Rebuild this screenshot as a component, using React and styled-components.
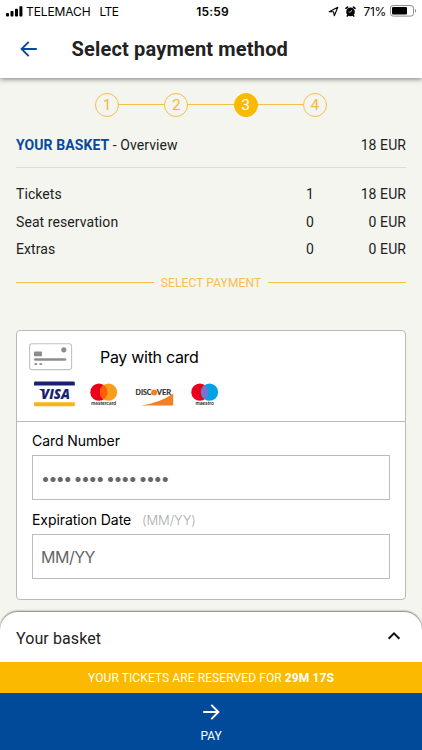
import { Fragment, useState } from "react";
import styled, { createGlobalStyle } from "styled-components";

const GlobalStyle = createGlobalStyle`
  * {
    box-sizing: border-box;
  }

  body {
    margin: 0;
    background: #f4f5ef;
    color: #222;
    font-family: Roboto, "Liberation Sans", sans-serif;
  }
`;

const steps = [1, 2, 3, 4];

const basketRows = [
  { name: "Tickets", count: 1, price: "18 EUR" },
  { name: "Seat reservation", count: 0, price: "0 EUR" },
  { name: "Extras", count: 0, price: "0 EUR" },
];

const SignalIcon = () => (
  <svg width="17" height="11" viewBox="0 0 17 11">
    <rect x="0" y="7" width="3" height="3.5" rx="0.8" />
    <rect x="4.5" y="5" width="3" height="5.5" rx="0.8" />
    <rect x="9" y="2.8" width="3" height="7.7" rx="0.8" />
    <rect x="13.4" y="0.3" width="3" height="10.2" rx="0.8" />
  </svg>
);

const LocationIcon = () => (
  <svg width="11" height="11" viewBox="0 0 11 11">
    <path
      d="M1.2 5.7 9.8 1.2 6.3 9.7 5.6 5.8Z"
      fill="none"
      stroke="#000"
      strokeWidth="1.1"
      strokeLinejoin="round"
    />
  </svg>
);

const AlarmIcon = () => (
  <svg width="11" height="11" viewBox="0 0 11 11">
    <circle cx="5.5" cy="5.9" r="4.3" />
    <path
      d="M1 2.3 2.5 1.1M10 2.3 8.5 1.1M2.9 9.2 2.3 10M8.1 9.2 8.7 10"
      stroke="#000"
      strokeWidth="1.6"
      strokeLinecap="round"
    />
    <path d="M7 3.9 5.5 6.1H3.7" fill="none" stroke="#fff" strokeWidth="0.7" />
  </svg>
);

const BatteryIcon = () => (
  <svg width="27" height="12" viewBox="0 0 27 12">
    <rect
      x="0.5"
      y="0.5"
      width="23"
      height="10.6"
      rx="2.6"
      fill="none"
      stroke="#8f8f8f"
    />
    <rect x="2" y="2" width="15" height="7.6" rx="1" />
    <path d="M25 4.1c1.6.5 1.6 3 0 3.5Z" fill="#8f8f8f" />
  </svg>
);

const ArrowIcon = ({ flip }) => (
  <svg width="18" height="18" viewBox="0 0 18 18">
    <path
      d="M1.2 9H16M9.3 1.9 16.4 9 9.3 16.1"
      fill="none"
      stroke="currentColor"
      strokeWidth="1.9"
      transform={flip ? "matrix(-1 0 0 1 18 0)" : undefined}
    />
  </svg>
);

const ChevronIcon = () => (
  <svg width="14" height="10" viewBox="0 0 14 10">
    <path d="M1.6 7.7 7 2.3 12.4 7.7" fill="none" stroke="#111" strokeWidth="2" />
  </svg>
);

const CardIcon = () => (
  <svg width="44" height="28" viewBox="0 0 44 28">
    <rect
      x="0.6"
      y="0.8"
      width="42"
      height="25.8"
      rx="2.5"
      fill="#fff"
      stroke="#c2c2c2"
      strokeWidth="1.1"
    />
    <rect x="5" y="8.4" width="8" height="4.8" rx="0.6" fill="#8c8c8c" />
    <circle cx="34.8" cy="6.8" r="2.6" fill="#8c8c8c" />
    <path
      d="M6.3 16.5H36"
      stroke="#8c8c8c"
      strokeWidth="2.6"
      strokeLinecap="round"
    />
    <path
      d="M6 21.1H7.6M11 21.1H12.6"
      stroke="#8c8c8c"
      strokeWidth="1.6"
      strokeLinecap="round"
    />
  </svg>
);

const VisaLogo = () => (
  <svg width="42" height="26" viewBox="0 0 42 26">
    <path d="M0 4.6V1.8Q0 .6 1.2.6H39.6Q40.8.6 40.8 1.8V4.6Z" fill="#1a1f71" />
    <path d="M0 21.2H40.8V24Q40.8 25.2 39.6 25.2H1.2Q0 25.2 0 24Z" fill="#f7b41b" />
    <text
      x="7"
      y="18.4"
      textLength="29"
      lengthAdjust="spacingAndGlyphs"
      fontFamily="Open Sans, sans-serif"
      fontSize="14.5"
      fontWeight="800"
      fontStyle="italic"
      fill="#1a1f71"
    >
      VISA
    </text>
    <path d="M4.8 8H9L10.6 13Q8.4 9.3 4.8 8Z" fill="#1a1f71" />
  </svg>
);

const CirclesLogo = ({ name, textWidth, left, right, middle }) => (
  <svg width="28" height="24" viewBox="0 0 28 24">
    <circle cx="8.9" cy="9.2" r="8.6" fill={left} />
    <circle cx="18.5" cy="9.2" r="8.6" fill={right} />
    <path d="M13.7 2.05a8.6 8.6 0 0 1 0 14.3 8.6 8.6 0 0 1 0-14.3Z" fill={middle} />
    <text
      x="13.7"
      y="22.2"
      textAnchor="middle"
      textLength={textWidth}
      lengthAdjust="spacingAndGlyphs"
      fontFamily="Inter, sans-serif"
      fontSize="4.6"
      fontWeight="600"
      fill="#222"
    >
      {name}
    </text>
  </svg>
);

const DiscoverLogo = () => (
  <svg width="39" height="20" viewBox="0 0 39 20">
    <path d="M38.2 5.6V17.6H6.2Q25.5 14.6 38.2 5.6Z" fill="#f48024" />
    <g
      fontFamily="Lato, sans-serif"
      fontSize="7.9"
      fontWeight="700"
      fill="#332f30"
      stroke="#332f30"
      strokeWidth="0.2"
    >
      <text x="0.6" y="7.2" textLength="15.8" lengthAdjust="spacingAndGlyphs">
        DISC
      </text>
      <text x="21.8" y="7.2" textLength="14.4" lengthAdjust="spacingAndGlyphs">
        VER
      </text>
    </g>
    <circle cx="19.1" cy="4.4" r="3" fill="#f48024" />
  </svg>
);

const App = () => {
  const [cardNumber, setCardNumber] = useState("");
  const [expiration, setExpiration] = useState("");

  return (
    <Page>
      <GlobalStyle />
      <Header>
        <StatusBar>
          <StatusGroup>
            <SignalIcon />
            <Carrier>TELEMACH</Carrier>
            <Network>LTE</Network>
          </StatusGroup>
          <Clock>15:59</Clock>
          <StatusGroup $end>
            <LocationIcon />
            <AlarmIcon />
            <Percent>71%</Percent>
            <BatteryIcon />
          </StatusGroup>
        </StatusBar>
        <TitleBar>
          <BackButton type="button" aria-label="Back">
            <ArrowIcon flip />
          </BackButton>
          <Title>Select payment method</Title>
        </TitleBar>
      </Header>

      <Content>
        <Steps>
          {steps.map((step) => (
            <Fragment key={step}>
              {step > 1 && <StepLine />}
              <Step $active={step === 3}>{step}</Step>
            </Fragment>
          ))}
        </Steps>

        <Overview>
          <span>
            <strong>YOUR BASKET</strong> - Overview
          </span>
          <span>18 EUR</span>
        </Overview>

        <BasketList>
          {basketRows.map((row) => (
            <BasketRow key={row.name}>
              <span>{row.name}</span>
              <span>{row.count}</span>
              <Price>{row.price}</Price>
            </BasketRow>
          ))}
        </BasketList>

        <SectionTitle>SELECT PAYMENT</SectionTitle>

        <PaymentCard>
          <PaymentHead>
            <PaymentName>
              <CardIcon />
              Pay with card
            </PaymentName>
            <Logos>
              <VisaLogo />
              <CirclesLogo
                name="mastercard"
                textWidth="25"
                left="#eb001b"
                right="#f79e1b"
                middle="#ff5f00"
              />
              <DiscoverLogo />
              <CirclesLogo
                name="maestro"
                textWidth="18.5"
                left="#eb001b"
                right="#00a2e5"
                middle="#7375cf"
              />
            </Logos>
          </PaymentHead>
          <PaymentForm>
            <Label htmlFor="number">Card Number</Label>
            <Input
              id="number"
              $dots
              placeholder="•••• •••• •••• ••••"
              value={cardNumber}
              onChange={(e) => setCardNumber(e.target.value)}
            />
            <Label htmlFor="expiration">
              Expiration Date <Hint>(MM/YY)</Hint>
            </Label>
            <Input
              id="expiration"
              placeholder="MM/YY"
              value={expiration}
              onChange={(e) => setExpiration(e.target.value)}
            />
          </PaymentForm>
        </PaymentCard>
      </Content>

      <Footer>
        <BasketToggle type="button">
          Your basket
          <ChevronIcon />
        </BasketToggle>
        <Reservation>
          YOUR TICKETS ARE RESERVED FOR <b>29M 17S</b>
        </Reservation>
        <PayButton type="button">
          <ArrowIcon />
          PAY
        </PayButton>
      </Footer>
    </Page>
  );
};

const Page = styled.div`
  display: flex;
  flex-direction: column;
  height: 750px;
  overflow: hidden;
`;

const Header = styled.header`
  flex: none;
  height: 78px;
  background: #fff;
  box-shadow: 0 1px 5px rgba(0, 0, 0, 0.5);
`;

const StatusBar = styled.div`
  display: grid;
  grid-template-columns: 1fr auto 1fr;
  align-items: center;
  height: 22px;
  padding: 0 5px 0 6px;
  color: #000;
  font: 12px Inter, sans-serif;
`;

const StatusGroup = styled.div`
  display: flex;
  align-items: center;
  justify-content: ${({ $end }) => ($end ? "flex-end" : "flex-start")};
  gap: ${({ $end }) => ($end ? "4px" : "3px")};

  svg:nth-child(2) {
    margin: 0 3px 0 2px;
  }
`;

const Carrier = styled.span`
  letter-spacing: -0.1px;
`;

const Network = styled.span`
  margin-left: 6px;
  letter-spacing: -0.6px;
`;

const Clock = styled.span`
  margin-left: 2px;
  font-weight: 600;
  letter-spacing: 0.2px;
`;

const Percent = styled.span`
  letter-spacing: -0.3px;
`;

const TitleBar = styled.div`
  display: flex;
  align-items: center;
  height: 54px;
  padding-left: 20px;
`;

const BackButton = styled.button`
  display: flex;
  width: 51.5px;
  padding: 0;
  border: 0;
  background: none;
  color: #0a489b;
`;

const Title = styled.h1`
  margin: 0;
  font-size: 20px;
  font-weight: 700;
  letter-spacing: 0.17px;
`;

const Content = styled.main`
  display: flex;
  flex: 1;
  flex-direction: column;
  padding: 14px 16px 0;
`;

const Steps = styled.div`
  display: flex;
  align-items: center;
  justify-content: center;
  height: 25px;
`;

const Step = styled.div`
  display: flex;
  align-items: center;
  justify-content: center;
  width: 24px;
  height: 24px;
  border: 1px solid ${({ $active }) => ($active ? "#fbb900" : "#f5c048")};
  border-radius: 50%;
  background: ${({ $active }) => ($active ? "#fbb900" : "none")};
  color: ${({ $active }) => ($active ? "#fff" : "#f5b93a")};
  font-size: 15.5px;
`;

const StepLine = styled.div`
  width: 45.2px;
  height: 1px;
  background: #f5c048;
`;

const Overview = styled.div`
  display: flex;
  align-items: center;
  justify-content: space-between;
  height: 51px;
  padding-top: 6px;
  border-bottom: 1px solid #dcddd9;
  font-size: 14px;
  letter-spacing: 0.08px;

  strong {
    color: #0a489b;
  }
`;

const BasketList = styled.div`
  padding-top: 12.5px;
`;

const BasketRow = styled.div`
  display: grid;
  grid-template-columns: 1fr 60px 40px;
  align-items: center;
  height: 27.5px;
  font-size: 14px;
  letter-spacing: 0.08px;
`;

const Price = styled.span`
  justify-self: end;
  white-space: nowrap;
`;

const SectionTitle = styled.h2`
  display: flex;
  align-items: center;
  gap: 7px;
  height: 19px;
  margin: 10px 0 38px;
  color: #f6bf4a;
  font-size: 12px;
  font-weight: 400;
  letter-spacing: 0.12px;

  &::before,
  &::after {
    flex: 1;
    height: 1px;
    background: #f6bf4a;
    content: "";
  }
`;

const PaymentCard = styled.section`
  height: 270px;
  border: 1px solid #b9bbb8;
  border-radius: 4px;
  background: #fff;
  color: #000;
  font-family: Inter, sans-serif;
`;

const PaymentHead = styled.div`
  height: 91px;
  padding: 12px 12px 0;
  border-bottom: 1px solid #b9bbb8;
`;

const PaymentName = styled.div`
  display: flex;
  align-items: center;
  gap: 27px;
  height: 28px;
  font-size: 16px;
  letter-spacing: -0.3px;
  line-height: 26px;
`;

const Logos = styled.div`
  display: flex;
  gap: 15px;
  margin: 10px 0 0 5px;

  svg {
    flex: none;
  }

  svg:nth-child(n + 2) {
    margin-top: 2px;
  }

  svg:nth-child(2) {
    margin-left: -1px;
  }

  svg:nth-child(3) {
    margin-top: 7px;
    margin-left: 2px;
  }

  svg:nth-child(4) {
    margin-left: 2px;
  }
`;

const PaymentForm = styled.div`
  display: flex;
  flex-direction: column;
  padding: 9px 15px 0;
`;

const Label = styled.label`
  height: 20px;
  margin-bottom: 4px;
  font-size: 14px;
  letter-spacing: -0.08px;
  line-height: 20px;
`;

const Hint = styled.span`
  margin-left: 7px;
  color: #aaa;
  font-size: 13px;
  font-weight: 300;
`;

const Input = styled.input`
  height: 45px;
  margin-bottom: 10px;
  padding: 0 8px;
  border: 1px solid #bcbcbc;
  border-radius: 0;
  outline: none;
  background: #fff;
  font: 16px Inter, sans-serif;
  letter-spacing: ${({ $dots }) => ($dots ? "-1.6px" : "-0.5px")};

  &::placeholder {
    color: #666;
    opacity: 1;
  }
`;

const Footer = styled.footer`
  flex: none;
  height: 138px;
`;

const BasketToggle = styled.button`
  display: flex;
  align-items: center;
  justify-content: space-between;
  width: 100%;
  height: 50px;
  padding: 2px 21px 0 16px;
  border: 0;
  border-radius: 18px 18px 0 0;
  background: #fff;
  box-shadow: 0 -1px 2px rgba(0, 0, 0, 0.5);
  color: #222;
  font: 16px Roboto, sans-serif;
  letter-spacing: 0.1px;

  svg {
    margin-bottom: 5px;
  }
`;

const Reservation = styled.div`
  display: flex;
  align-items: center;
  justify-content: center;
  gap: 3px;
  height: 31px;
  padding-top: 1px;
  background: #fbb900;
  color: #fff;
  font-size: 12px;
  letter-spacing: 0.09px;
`;

const PayButton = styled.button`
  display: flex;
  flex-direction: column;
  align-items: center;
  gap: 8px;
  width: 100%;
  height: 57px;
  padding: 10px 0 0;
  border: 0;
  background: #004a99;
  color: #fff;
  font: 12px Roboto, sans-serif;
`;

export default App;
